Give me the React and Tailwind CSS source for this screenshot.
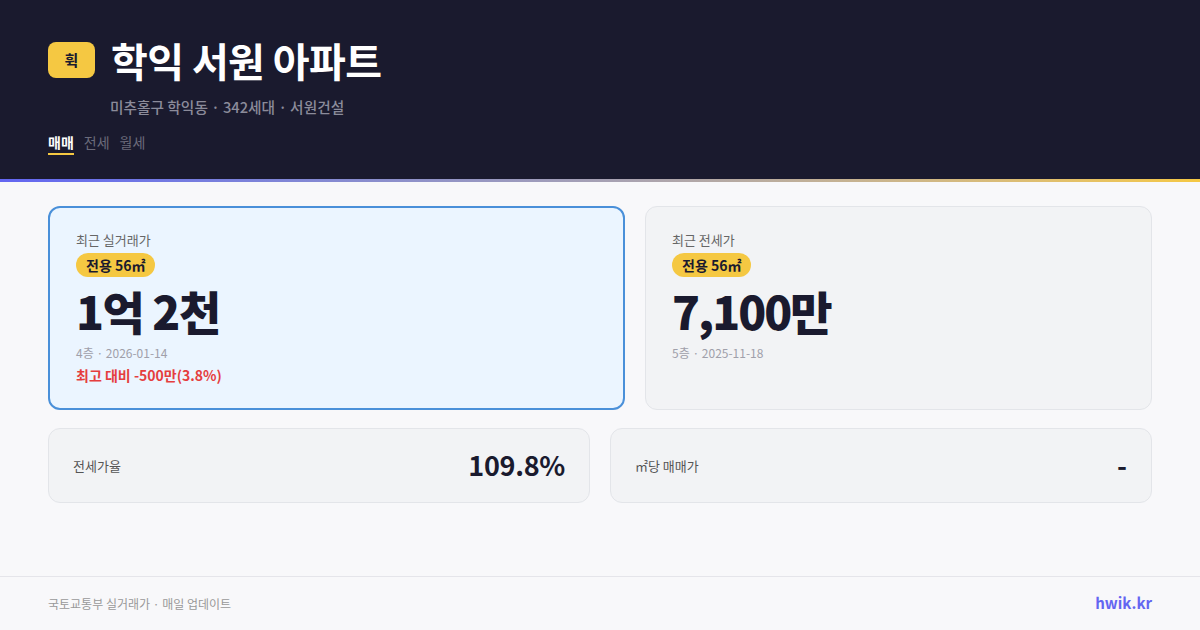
export default function App() {
  const font = { fontFamily: '"Noto Sans CJK KR", "Noto Sans", sans-serif' };
  return (
    <div style={font} className="w-[1200px] h-[630px] bg-[#f8f8fa] flex flex-col overflow-hidden">
      {/* Header */}
      <div className="bg-[#1a1a2e] h-[179px] px-12 pt-[39px]">
        <div className="flex items-center gap-[16px]">
          <div className="w-[47px] h-[36px] rounded-[8px] bg-[#f5c842] flex items-center justify-center text-[15px] font-bold text-[#1a1a2e]">
            휙
          </div>
          <h1 className="text-[40px] leading-[42px] font-bold text-white tracking-[-0.6px]">학익 서원 아파트</h1>
        </div>
        <p className="ml-[62px] mt-[16px] text-[14.7px] leading-[20px] font-medium text-[#8b8b9a]">
          미추홀구 학익동 · 342세대 · 서원건설
        </p>
        <div className="flex gap-[10px] mt-[15px] text-[14px] leading-[20px]">
          <span className="text-white font-bold border-b-2 border-[#f5c842] pb-[1px]">매매</span>
          <span className="text-[#6b6b7b]">전세</span>
          <span className="text-[#6b6b7b]">월세</span>
        </div>
      </div>
      <div className="h-[3px] bg-gradient-to-r from-[#6366f1] to-[#f5c842]" />

      {/* Main */}
      <div className="flex-1 px-12 pt-[24px]">
        <div className="flex gap-[20px]">
          <div className="w-[577px] h-[204px] rounded-[12px] border-2 border-[#4a90d9] bg-[#ebf5ff] px-[26px] pt-[23px]">
            <p className="text-[13px] leading-[18px] text-[#666]">최근 실거래가</p>
            <span className="inline-block mt-[4px] px-[10px] rounded-full bg-[#f5c842] text-[14px] leading-[24px] font-bold text-[#1a1a2e]">전용 56㎡</span>
            <p className="mt-[2px] text-[46px] leading-[62px] font-black text-[#1a1a2e] tracking-[-1.5px]">1억 2천</p>
            <p className="mt-[4px] text-[12px] leading-[16px] text-[#a0a0aa]">4층 · 2026-01-14</p>
            <p className="mt-[4px] text-[14px] leading-[20px] font-semibold text-[#e53e3e]">최고 대비 -500만(3.8%)</p>
          </div>
          <div className="flex-1 h-[204px] rounded-[12px] border border-[#e3e5e9] bg-[#f2f3f5] px-[26px] pt-[24px]">
            <p className="text-[13px] leading-[18px] text-[#666]">최근 전세가</p>
            <span className="inline-block mt-[4px] px-[10px] rounded-full bg-[#f5c842] text-[14px] leading-[24px] font-bold text-[#1a1a2e]">전용 56㎡</span>
            <p className="mt-[2px] text-[46px] leading-[62px] font-black text-[#1a1a2e] tracking-[-2px]">7,100만</p>
            <p className="mt-[4px] text-[12px] leading-[16px] text-[#a0a0aa]">5층 · 2025-11-18</p>
          </div>
        </div>

        <div className="flex gap-[20px] mt-[18px]">
          <div className="flex-1 h-[75px] rounded-[12px] border border-[#e3e5e9] bg-[#f2f3f5] px-[24px] flex items-center justify-between">
            <span className="text-[13px] text-[#555]">전세가율</span>
            <span className="text-[27px] font-bold text-[#1a1a2e] tracking-[-0.3px]">109.8%</span>
          </div>
          <div className="flex-1 h-[75px] rounded-[12px] border border-[#e3e5e9] bg-[#f2f3f5] px-[24px] flex items-center justify-between">
            <span className="text-[13px] text-[#555]">㎡당 매매가</span>
            <span className="text-[27px] font-bold text-[#1a1a2e]">-</span>
          </div>
        </div>
      </div>

      {/* Footer */}
      <div className="h-[54px] border-t border-[#e5e5ea] px-12 flex items-center justify-between">
        <span className="text-[12px] text-[#999]">국토교통부 실거래가 · 매일 업데이트</span>
        <span className="text-[15px] font-bold text-[#6366f1]">hwik.kr</span>
      </div>
    </div>
  );
}
